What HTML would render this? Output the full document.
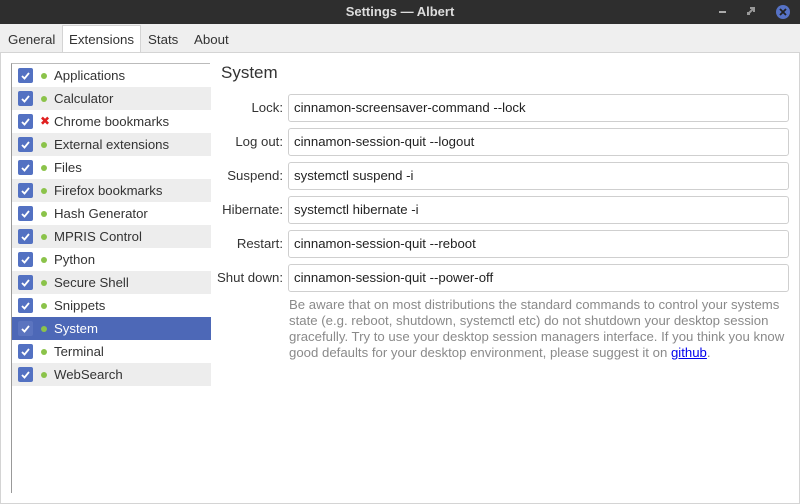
<!DOCTYPE html>
<html><head><style>
*{margin:0;padding:0;box-sizing:border-box}
body{width:800px;height:504px;overflow:hidden;background:#efefef;font-family:"Liberation Sans","DejaVu Sans",sans-serif;font-size:13px;color:#333;position:relative}
.title{position:absolute;left:0;top:0;width:800px;height:24px;background:#2e2e2e;color:#ddd;text-align:center;line-height:24px;font-size:13px;font-weight:bold}
.tabs{position:absolute;top:24px;left:0;width:800px;height:28px;font-size:13.3px}
.tab{position:absolute;top:4px;height:24px;line-height:24px;color:#333}
.tab.act{top:1px;height:28px;background:#fff;border:1px solid #d4d4d4;border-bottom:none;padding:0 6px;line-height:28px}
.panel{position:absolute;left:0;top:52px;width:800px;height:452px;background:#fff;border:1px solid #d4d4d4}
.list{position:absolute;left:11px;top:63px;width:199px;height:430px;border-left:1px solid #999;border-top:1px solid #bbb}
.row{position:absolute;left:0;width:199px;height:23px;line-height:23px;font-size:13.2px}
.row.alt{background:#ededed}
.row.sel{background:#4d68b7;color:#fff}
.cb{position:absolute;left:6px;top:4px;width:15px;height:15px;background:#5371c2;border-radius:2px}
.cb svg{position:absolute;left:2px;top:2px}
.dot{position:absolute;left:29px;top:9px;width:6px;height:6px;border-radius:50%;background:#8bc34a}
.x{position:absolute;left:28px;top:0;color:#e02020;font-weight:bold;font-size:12px}
.lbl{position:absolute;left:42px}
.h{position:absolute;left:221px;top:63px;font-size:17px;color:#333}
.fl{position:absolute;right:517px;width:100px;text-align:right;height:28px;line-height:28px;font-size:13.2px}
.in{position:absolute;left:288px;width:501px;height:28px;border:1px solid #cfcfcf;border-radius:3px;line-height:26px;padding-left:5px;color:#222;background:#fff;font-size:13.2px}
.note{position:absolute;left:289px;top:297px;color:#8a8a8a;line-height:16px;white-space:nowrap;font-size:13.2px}
.note a{color:#0000ee;text-decoration:underline}
</style></head><body>
<div class="title">Settings — Albert</div>
<svg style="position:absolute;left:719px;top:9px" width="10" height="6"><rect x="0" y="2" width="7" height="2" fill="#aaa"/></svg>
<svg style="position:absolute;left:747px;top:7px" width="10" height="10"><path d="M1 7 L7 1 M3 1h4v4 M1 5v2h2" stroke="#999" stroke-width="2" fill="none"/></svg>
<div style="position:absolute;left:776px;top:5px;width:14px;height:14px;border-radius:50%;background:#5672c6"></div>
<svg style="position:absolute;left:779px;top:8px" width="8" height="8"><path d="M1 1L7 7M7 1L1 7" stroke="#222" stroke-width="1.8"/></svg>
<div class="tabs">
<div class="tab" style="left:8px">General</div>
<div class="tab act" style="left:62px">Extensions</div>
<div class="tab" style="left:148px">Stats</div>
<div class="tab" style="left:194px">About</div>
</div>
<div class="panel"></div>
<div class="list">
<div class="row" style="top:0"><div class="cb"><svg width="11" height="11"><path d="M2 6l2.5 2.5L9 3" stroke="#fff" stroke-width="1.8" fill="none"/></svg></div><div class="dot"></div><span class="lbl">Applications</span></div>
<div class="row alt" style="top:23px"><div class="cb"><svg width="11" height="11"><path d="M2 6l2.5 2.5L9 3" stroke="#fff" stroke-width="1.8" fill="none"/></svg></div><div class="dot"></div><span class="lbl">Calculator</span></div>
<div class="row" style="top:46px"><div class="cb"><svg width="11" height="11"><path d="M2 6l2.5 2.5L9 3" stroke="#fff" stroke-width="1.8" fill="none"/></svg></div><span class="x">✖</span><span class="lbl">Chrome bookmarks</span></div>
<div class="row alt" style="top:69px"><div class="cb"><svg width="11" height="11"><path d="M2 6l2.5 2.5L9 3" stroke="#fff" stroke-width="1.8" fill="none"/></svg></div><div class="dot"></div><span class="lbl">External extensions</span></div>
<div class="row" style="top:92px"><div class="cb"><svg width="11" height="11"><path d="M2 6l2.5 2.5L9 3" stroke="#fff" stroke-width="1.8" fill="none"/></svg></div><div class="dot"></div><span class="lbl">Files</span></div>
<div class="row alt" style="top:115px"><div class="cb"><svg width="11" height="11"><path d="M2 6l2.5 2.5L9 3" stroke="#fff" stroke-width="1.8" fill="none"/></svg></div><div class="dot"></div><span class="lbl">Firefox bookmarks</span></div>
<div class="row" style="top:138px"><div class="cb"><svg width="11" height="11"><path d="M2 6l2.5 2.5L9 3" stroke="#fff" stroke-width="1.8" fill="none"/></svg></div><div class="dot"></div><span class="lbl">Hash Generator</span></div>
<div class="row alt" style="top:161px"><div class="cb"><svg width="11" height="11"><path d="M2 6l2.5 2.5L9 3" stroke="#fff" stroke-width="1.8" fill="none"/></svg></div><div class="dot"></div><span class="lbl">MPRIS Control</span></div>
<div class="row" style="top:184px"><div class="cb"><svg width="11" height="11"><path d="M2 6l2.5 2.5L9 3" stroke="#fff" stroke-width="1.8" fill="none"/></svg></div><div class="dot"></div><span class="lbl">Python</span></div>
<div class="row alt" style="top:207px"><div class="cb"><svg width="11" height="11"><path d="M2 6l2.5 2.5L9 3" stroke="#fff" stroke-width="1.8" fill="none"/></svg></div><div class="dot"></div><span class="lbl">Secure Shell</span></div>
<div class="row" style="top:230px"><div class="cb"><svg width="11" height="11"><path d="M2 6l2.5 2.5L9 3" stroke="#fff" stroke-width="1.8" fill="none"/></svg></div><div class="dot"></div><span class="lbl">Snippets</span></div>
<div class="row sel" style="top:253px"><div class="cb" style="background:#5b74bf"><svg width="11" height="11"><path d="M2 6l2.5 2.5L9 3" stroke="#fff" stroke-width="1.8" fill="none"/></svg></div><div class="dot"></div><span class="lbl">System</span></div>
<div class="row" style="top:276px"><div class="cb"><svg width="11" height="11"><path d="M2 6l2.5 2.5L9 3" stroke="#fff" stroke-width="1.8" fill="none"/></svg></div><div class="dot"></div><span class="lbl">Terminal</span></div>
<div class="row alt" style="top:299px"><div class="cb"><svg width="11" height="11"><path d="M2 6l2.5 2.5L9 3" stroke="#fff" stroke-width="1.8" fill="none"/></svg></div><div class="dot"></div><span class="lbl">WebSearch</span></div>
</div>
<div class="h">System</div>
<div class="fl" style="top:94px">Lock:</div><div class="in" style="top:94px">cinnamon-screensaver-command --lock</div>
<div class="fl" style="top:128px">Log out:</div><div class="in" style="top:128px">cinnamon-session-quit --logout</div>
<div class="fl" style="top:162px">Suspend:</div><div class="in" style="top:162px">systemctl suspend -i</div>
<div class="fl" style="top:196px">Hibernate:</div><div class="in" style="top:196px">systemctl hibernate -i</div>
<div class="fl" style="top:230px">Restart:</div><div class="in" style="top:230px">cinnamon-session-quit --reboot</div>
<div class="fl" style="top:264px">Shut down:</div><div class="in" style="top:264px">cinnamon-session-quit --power-off</div>
<div class="note">Be aware that on most distributions the standard commands to control your systems<br>state (e.g. reboot, shutdown, systemctl etc) do not shutdown your desktop session<br>gracefully. Try to use your desktop session managers interface. If you think you know<br>good defaults for your desktop environment, please suggest it on <a>github</a>.</div>
</body></html>
